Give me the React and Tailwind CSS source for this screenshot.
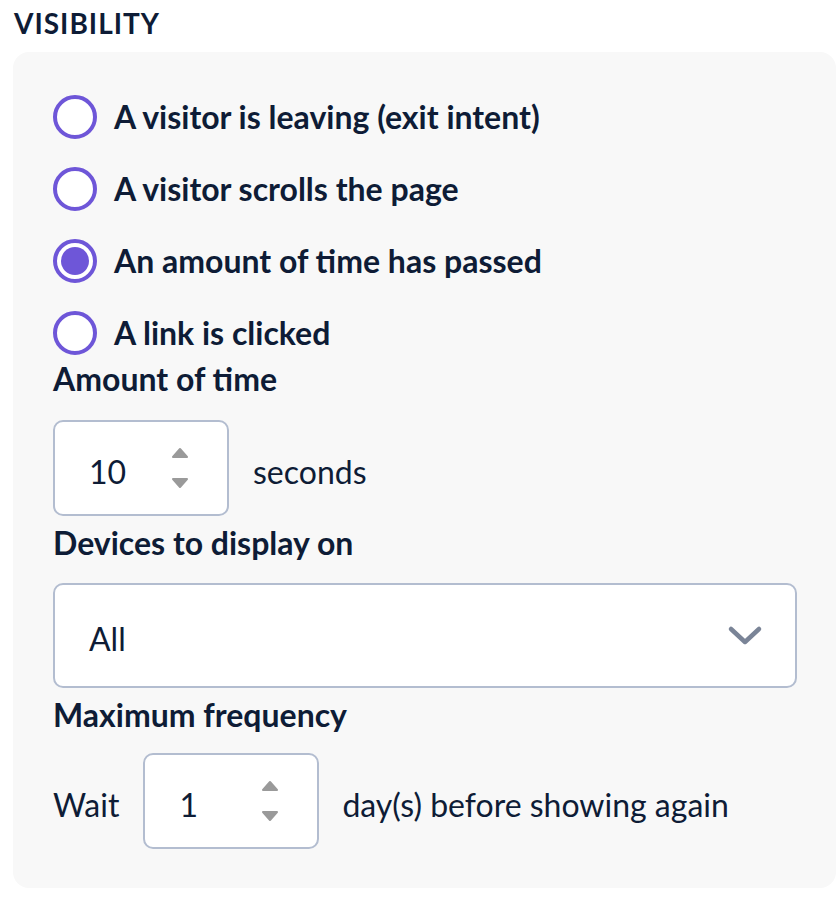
import React, { useState } from 'react';

const options = [
  'A visitor is leaving (exit intent)',
  'A visitor scrolls the page',
  'An amount of time has passed',
  'A link is clicked',
];

function Radio({ checked }) {
  return (
    <span className="flex h-[44px] w-[44px] shrink-0 items-center justify-center rounded-full border-[4px] border-[#6e56d8] bg-white">
      {checked && <span className="h-[28px] w-[28px] rounded-full bg-[#6e56d8]" />}
    </span>
  );
}

function Spinner() {
  return (
    <svg width="18" height="44" viewBox="0 0 18 44" className="shrink-0">
      <path d="M2 11 L9 3 L16 11 Z" fill="#9a9a9a" stroke="#9a9a9a" strokeWidth="2" strokeLinejoin="round" />
      <path d="M2 33 L9 41 L16 33 Z" fill="#9a9a9a" stroke="#9a9a9a" strokeWidth="2" strokeLinejoin="round" />
    </svg>
  );
}

function NumberBox({ value }) {
  return (
    <div className="flex h-[96px] w-[176px] items-center justify-between rounded-[10px] border-2 border-[#b3bdd0] bg-white pl-[34px] pr-[38px]">
      <span className="pt-[7px] text-[32px] text-[#0e1c36]">{value}</span>
      <Spinner />
    </div>
  );
}

export default function App() {
  const [selected] = useState(2);
  return (
    <div className="min-h-[898px] bg-white pl-[13px] pt-[6px] font-['Lato',sans-serif] text-[#0e1c36]">
      <h2 className="ml-px text-[28px] font-bold tracking-[1px] leading-[34px]">VISIBILITY</h2>
      <div className="mt-[12px] h-[836px] rounded-[16px] bg-[#f8f8f8] pl-[40px] pt-[43px]">
        <div className="flex flex-col gap-[28px]">
          {options.map((o, i) => (
            <label key={o} className="flex items-center gap-[17px]">
              <Radio checked={i === selected} />
              <span className="text-[32px] font-bold leading-[44px]">{o}</span>
            </label>
          ))}
        </div>
        <div className="mt-[2px] text-[32px] font-bold leading-[44px]">Amount of time</div>
        <div className="mt-[19px] flex items-center gap-[24px]">
          <NumberBox value="10" />
          <span className="pt-[7px] text-[32px]">seconds</span>
        </div>
        <div className="mt-[5px] text-[32px] font-bold leading-[44px]">Devices to display on</div>
        <div className="mt-[18px] flex h-[105px] w-[744px] items-center justify-between rounded-[10px] border-2 border-[#b3bdd0] bg-white pl-[34px] pr-[32px]">
          <span className="pt-[6px] text-[32px]">All</span>
          <svg width="36" height="22" viewBox="0 0 36 22">
            <path d="M4 4 L18 17 L32 4" fill="none" stroke="#7a8497" strokeWidth="4.5" strokeLinecap="round" strokeLinejoin="round" />
          </svg>
        </div>
        <div className="mt-[5px] text-[32px] font-bold leading-[44px]">Maximum frequency</div>
        <div className="mt-[16px] flex items-center">
          <span className="mr-[24px] pt-[7px] text-[32px]">Wait</span>
          <NumberBox value="1" />
          <span className="ml-[23px] pt-[7px] text-[32px]">day(s) before showing again</span>
        </div>
      </div>
    </div>
  );
}
